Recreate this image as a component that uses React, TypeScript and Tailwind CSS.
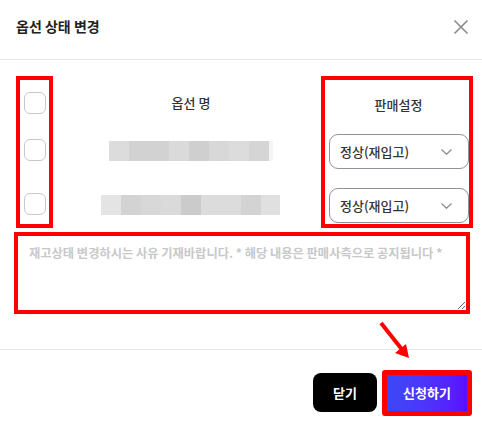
import React from "react";

const font = { fontFamily: '"Noto Sans CJK KR", "Noto Sans", sans-serif' };

const bar1 = [
  { w: 20, c: "#dcdcdc" },
  { w: 40, c: "#d2d2d2" },
  { w: 20, c: "#dadada" },
  { w: 20, c: "#cfcfcf" },
  { w: 20, c: "#d8d8d8" },
  { w: 20, c: "#dcdcdc" },
  { w: 20, c: "#d5d5d5" },
  { w: 4, c: "#f4f4f4" },
];
const bar2 = [
  { w: 20, c: "#e4e4e4" },
  { w: 20, c: "#d3d3d3" },
  { w: 20, c: "#d8d8d8" },
  { w: 20, c: "#dadada" },
  { w: 20, c: "#cbcbcb" },
  { w: 40, c: "#dcdcdc" },
  { w: 20, c: "#d3d3d3" },
  { w: 19, c: "#e0e0e0" },
];

function Bar({ blocks, ml, mt }: { blocks: { w: number; c: string }[]; ml: string; mt: string }) {
  return (
    <div className={`flex h-[20px] ${ml} ${mt}`}>
      {blocks.map((b, i) => (
        <div key={i} className="h-full" style={{ width: b.w, background: b.c }} />
      ))}
    </div>
  );
}

function Select({ mt }: { mt: string }) {
  return (
    <div
      className={`${mt} ml-[4px] flex h-[35px] w-[140px] shrink-0 items-center justify-between rounded-[9px] border border-[#8f949b] pl-[10px] pr-[16px] text-[13px] font-medium text-[#333]`}
    >
      <span>정상(재입고)</span>
      <svg width="11" height="6" viewBox="0 0 11 6" fill="none">
        <path d="M0.5 0.5 L5.5 5.3 L10.5 0.5" stroke="#8a8a8a" strokeWidth="1.2" />
      </svg>
    </div>
  );
}

export default function App() {
  return (
    <div className="relative h-[425px] w-[482px] overflow-hidden bg-white" style={font}>
      {/* header */}
      <div className="flex h-[60px] items-start justify-between border-b border-[#e6e6e6] pl-4 pr-[13px] pt-4">
        <span className="text-[14px] font-bold leading-[20px] text-[#222]">옵선 상태 변경</span>
        <svg width="16" height="16" viewBox="0 0 16 16" className="mt-[3px]" fill="none">
          <path d="M1.5 1.5 L14.5 14.5 M14.5 1.5 L1.5 14.5" stroke="#8a8a8a" strokeWidth="1.6" />
        </svg>
      </div>

      {/* table */}
      <div className="flex pl-4 pr-[9px] pt-4">
        <div className="flex h-[152px] w-[37px] shrink-0 flex-col items-center border-4 border-[#ff0000]">
          <div className="mt-[12px] h-[22px] w-[22px] rounded-[6px] border border-[#c8c8c8]" />
          <div className="mt-[25px] h-[22px] w-[22px] rounded-[6px] border border-[#c8c8c8]" />
          <div className="mt-[32px] h-[22px] w-[22px] rounded-[6px] border border-[#c8c8c8]" />
        </div>
        <div className="flex flex-1 flex-col">
          <div className="mt-[17px] h-[20px] pl-[8px] text-center text-[13px] font-medium leading-[20px] text-[#333]">
            옵선 명
          </div>
          <Bar blocks={bar1} ml="ml-[56px]" mt="mt-[28px]" />
          <Bar blocks={bar2} ml="ml-[48px]" mt="mt-[34px]" />
        </div>
        <div className="flex h-[152px] w-[152px] shrink-0 flex-col border-4 border-[#ff0000]">
          <div className="mt-[15px] h-[20px] pl-[3px] text-center text-[13px] font-medium leading-[20px] text-[#333]">
            판매설정
          </div>
          <Select mt="mt-[19px]" />
          <Select mt="mt-[19px]" />
        </div>
      </div>

      {/* textarea */}
      <div className="ml-[14px] mt-[4px] h-[82px] w-[456px] border-4 border-[#ff0000]">
        <textarea
          className="block h-full w-full resize-y bg-white pl-[11px] pt-[8px] text-[12.25px] font-bold leading-[18px] outline-none placeholder:text-[#c8c8c8]"
          style={font}
          placeholder="재고상태 변경하시는 사유 기재바랍니다. * 해당 내용은 판매사측으로 공지됩니다 *"
        />
      </div>

      {/* footer */}
      <div className="mt-[35px] border-t border-[#e6e6e6]" />
      <div className="flex items-center justify-end gap-[5px] pr-[10px] pt-[20px]">
        <button className="mt-[3px] flex h-[39px] w-[64px] items-center justify-center self-start rounded-[8px] bg-black text-[13px] font-bold text-white">
          닫기
        </button>
        <div className="rounded-[3px] border-[5px] border-[#ff0000]">
          <button className="flex h-[36px] w-[80px] items-center justify-center bg-gradient-to-r from-[#3c48f6] to-[#5a0cff] text-[13px] font-bold text-white">
            신청하기
          </button>
        </div>
      </div>

      {/* annotation arrow */}
      <svg className="absolute left-[370px] top-[315px]" width="50" height="50" viewBox="0 0 50 50" fill="none">
        <path d="M11 8 L34 37" stroke="#ff0000" strokeWidth="4" />
        <path d="M39 43 L25 38 L36 29 Z" fill="#ff0000" />
      </svg>
    </div>
  );
}
